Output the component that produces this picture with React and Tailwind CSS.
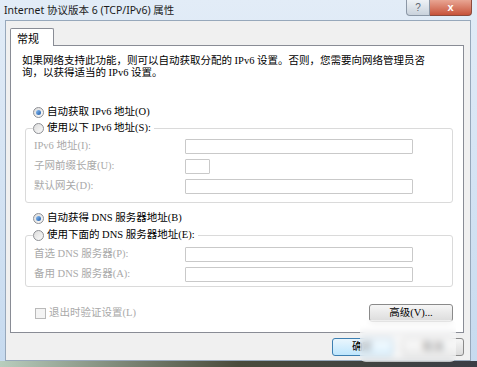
import React from 'react'

const body = "font-['Liberation_Serif','Noto_Sans_CJK_SC',serif] text-[10.5px] leading-[12px]"

function Radio({ checked, label }) {
  return (
    <div className="flex items-center h-[16px]">
      <span className="w-[11px] h-[11px] rounded-full border border-[#8e9095] bg-gradient-to-br from-[#dcdcdc] to-[#fbfbfb] flex items-center justify-center">
        {checked && <span className="w-[5px] h-[5px] rounded-full bg-gradient-to-br from-[#8fc2f5] to-[#1a5aa8]" />}
      </span>
      <span className="ml-[3px] text-black whitespace-nowrap">{label}</span>
    </div>
  )
}

function Field({ label, w }) {
  return (
    <div className="flex items-center h-[20px] ml-[1px]">
      <span className="w-[151px] text-[#a9a9a9] whitespace-nowrap">{label}</span>
      <span className={`h-[15px] border border-[#c9c9c9] rounded-[1px] bg-white ${w}`} />
    </div>
  )
}

function Group({ legend, children, className }) {
  return (
    <fieldset className={`ml-[14px] w-[428px] border border-[#dadada] rounded-[3px] pl-[7px] ${className}`}>
      <legend className="pr-[3px]">
        <Radio label={legend} />
      </legend>
      {children}
    </fieldset>
  )
}

function Button({ children, focus, className }) {
  return (
    <div
      className={`h-[18px] flex items-center justify-center rounded-[3px] border ${
        focus
          ? 'border-[#3c7fb1] bg-gradient-to-b from-[#eaf6fd] to-[#bee6fd]'
          : 'border-[#8a8a8a] bg-gradient-to-b from-[#f6f6f6] to-[#dcdcdc]'
      } text-black ${className}`}
    >
      {children}
    </div>
  )
}

export default function App() {
  return (
    <div className={`relative w-[477px] h-[367px] overflow-hidden bg-gradient-to-b from-[#e2ecf7] to-[#c6daef] ${body}`}>
      {/* title bar */}
      <div className="h-[20px] flex items-center pl-[4px] font-['Noto_Sans','Noto_Sans_CJK_SC',sans-serif] text-[10.5px] text-[#1b1b1b]">
        Internet 协议版本 6 (TCP/IPv6) 属性
      </div>
      <div className="absolute top-0 left-[406px] flex">
        <div className="w-[24px] h-[16px] rounded-bl-[4px] border border-t-0 border-[#8b97a6] bg-gradient-to-b from-[#eef2f6] to-[#c9d2dc] flex items-center justify-center text-[10px] leading-none text-[#5c6670] font-['Liberation_Sans',sans-serif]">
          ?
        </div>
        <div className="w-[42px] h-[16px] rounded-br-[4px] border border-t-0 border-l-0 border-[#8c4a3c] bg-gradient-to-b from-[#e8a593] to-[#c6523a] flex items-center justify-center text-[11px] leading-none text-white font-bold font-['Liberation_Sans',sans-serif]">
          x
        </div>
      </div>

      {/* client area */}
      <div className="ml-[5px] w-[466px] h-[341px] bg-[#f0f0f0] border border-[#97a8bb] flex flex-col">
        <div className="ml-[4px] mt-[7px] w-[44px] h-[18px] -mb-[1px] relative z-10 bg-white border border-b-0 border-[#898c95] rounded-t-[2px] flex items-center pl-[6px] text-[11px] text-black font-['Noto_Sans_CJK_SC',sans-serif]">
          常规
        </div>
        <div className="ml-[4px] w-[454px] h-[288px] bg-white border border-[#898c95] flex flex-col">
          <p className="mt-[9px] ml-[11px] text-black whitespace-nowrap">
            如果网络支持此功能，则可以自动获取分配的 IPv6 设置。否则，您需要向网络管理员咨
            <br />
            询，以获得适当的 IPv6 设置。
          </p>

          <div className="mt-[25px] ml-[22px]">
            <Radio checked label="自动获取 IPv6 地址(O)" />
          </div>
          <Group legend="使用以下 IPv6 地址(S):" className="pb-[6px]">
            <Field label="IPv6 地址(I):" w="w-[228px]" />
            <Field label="子网前缀长度(U):" w="w-[25px]" />
            <Field label="默认网关(D):" w="w-[228px]" />
          </Group>

          <div className="mt-[7px] ml-[22px]">
            <Radio checked label="自动获得 DNS 服务器地址(B)" />
          </div>
          <Group legend="使用下面的 DNS 服务器地址(E):" className="mt-[1px] pt-[1px] pb-[2px]">
            <Field label="首选 DNS 服务器(P):" w="w-[228px]" />
            <Field label="备用 DNS 服务器(A):" w="w-[228px]" />
          </Group>

          <div className="mt-[17px] flex items-center justify-between h-[18px] pl-[24px] pr-[10px]">
            <div className="flex items-center">
              <span className="w-[11px] h-[11px] border border-[#b9b9b9] bg-[#f4f4f4]" />
              <span className="ml-[3px] text-[#a9a9a9]">退出时验证设置(L)</span>
            </div>
            <Button className="w-[84px]">高级(V)...</Button>
          </div>
        </div>

        <div className="mt-[5px] flex justify-end gap-[9px] pr-[6px]">
          <Button focus className="w-[61px]">确定</Button>
          <Button className="w-[62px]">取消</Button>
        </div>
      </div>

      {/* bottom frame */}
      <div className="h-[6px] bg-gradient-to-r from-[#b8cdbd] via-[#4a4b3b] to-[#3b3e46]" />

      {/* watermark blur */}
      <div className="absolute left-[360px] top-[320px] w-[96px] h-[42px] bg-white/50 backdrop-blur-[3px] rounded-[6px]" />
    </div>
  )
}
